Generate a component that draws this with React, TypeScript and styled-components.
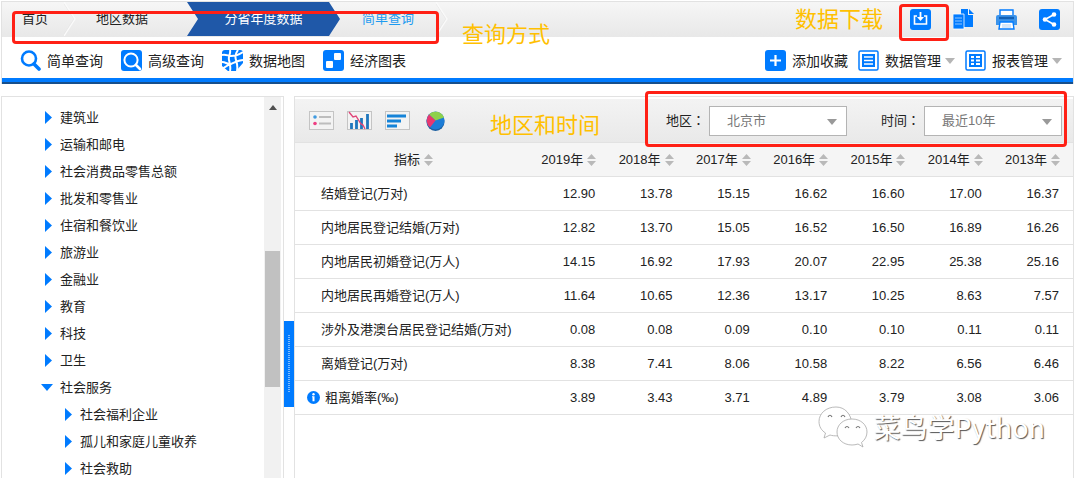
import React from "react";
import styled, { createGlobalStyle } from "styled-components";

const BLUE = "#007bff";
const LINE = "#e2e2e2";
const SANS = `"Liberation Sans", "Noto Sans CJK SC", sans-serif`;

const GlobalStyle = createGlobalStyle`
  *, *::before, *::after { box-sizing: border-box; }
  body { margin: 0; background: #fff; color: #222; font: 14px/20px ${SANS}; }
  button, select { font: inherit; color: inherit; }
  a { color: inherit; text-decoration: none; }
  svg { display: block; flex: none; }
`;

const Page = styled.div`
  display: flex;
  flex-direction: column;
  height: 100vh;
  padding: 1px 6px 0 1px;
  overflow: hidden;
`;

const Header = styled.header`
  flex: none;
  border: 1px solid ${LINE};
  border-bottom: 0;
`;

const TopBar = styled.div`
  display: flex;
  justify-content: space-between;
  height: 35px;
  background: linear-gradient(#f6f6f6, #e8e8e8);
`;

const Crumbs = styled.nav`
  position: relative;
  display: flex;
  height: 34px;
  font-size: 13px;
`;

const Crumb = styled.a<{ $width: number; $tone?: "active" | "link" }>`
  display: flex;
  align-items: center;
  justify-content: ${(p) => (p.$tone ? "center" : "flex-start")};
  width: ${(p) => p.$width}px;
  padding-left: ${(p) => (p.$tone ? 0 : 20)}px;
  ${(p) =>
    p.$tone === "active" &&
    `background: #1f58a8; color: #fff;
     clip-path: polygon(0 0, calc(100% - 11px) 0, 100% 50%, calc(100% - 11px) 100%, 0 100%, 11px 50%);`}
  ${(p) => p.$tone === "link" && "color: #1e9bf0;"}
`;

const Mark = styled.span<{ $inset: string }>`
  position: absolute;
  inset: ${(p) => p.$inset};
  border: 3px solid #ff2015;
  border-radius: 4px;
  pointer-events: none;
`;

const Note = styled.span<{ $left: number; $top: number }>`
  position: absolute;
  left: ${(p) => p.$left}px;
  top: ${(p) => p.$top}px;
  color: #ffc000;
  font-size: 22px;
  line-height: 28px;
  white-space: nowrap;
  pointer-events: none;
`;

const Actions = styled.div`
  display: flex;
  align-items: center;
  gap: 22px;
  padding-right: 13px;
`;

const IconButton = styled.button<{ $gap?: number }>`
  position: relative;
  display: flex;
  align-items: center;
  gap: 6px;
  padding: 0;
  border: 0;
  background: none;
  cursor: pointer;
`;

const ToolBar = styled.div`
  display: flex;
  align-items: center;
  justify-content: space-between;
  height: 41px;
  padding: 6px 11px 0 18px;
`;

const ToolGroup = styled.div<{ $gap: number }>`
  display: flex;
  gap: ${(p) => p.$gap}px;
`;

const MenuLabel = styled.span`
  display: flex;
  align-items: center;
  gap: 4px;
`;

const Rule = styled.div`
  height: 6px;
  background: ${BLUE};
  border-bottom: 2px solid #174f8c;
`;

const Main = styled.main`
  display: flex;
  flex: 1;
  min-height: 0;
  margin-top: 12px;
`;

const Sidebar = styled.aside`
  display: flex;
  flex: none;
  width: 283px;
  overflow: hidden;
  border: 1px solid ${LINE};
  border-bottom: 0;
`;

const Tree = styled.ul`
  flex: 1;
  margin: 0;
  padding: 7px 0 0;
  list-style: none;
  font-size: 13px;
`;

const TreeItem = styled.li<{ $level: number }>`
  padding-left: ${(p) => 18 + p.$level * 20}px;
`;

const TreeLink = styled.a`
  display: flex;
  align-items: center;
  gap: 6px;
  height: 27px;
`;

const ScrollTrack = styled.div`
  display: flex;
  flex-direction: column;
  align-items: center;
  width: 17px;
  margin-right: 2px;
  padding-top: 8px;
  background: #f1f1f1;
`;

const ScrollThumb = styled.div`
  width: 15px;
  height: 136px;
  margin-top: 141px;
  background: #c1c1c1;
`;

const Splitter = styled.button`
  flex: none;
  display: flex;
  align-items: center;
  justify-content: center;
  width: 10px;
  height: 86px;
  margin-top: 225px;
  padding: 0;
  border: 0;
  background: ${BLUE};
`;

const Panel = styled.section`
  position: relative;
  flex: 1;
  min-width: 0;
  border: 1px solid ${LINE};
  border-bottom: 0;
`;

const PanelBar = styled.div`
  position: relative;
  display: flex;
  align-items: center;
  justify-content: space-between;
  height: 43px;
  margin-top: 2px;
  padding: 0 11px 0 14px;
  background: linear-gradient(#f3f3f3, #e9e9e9);
`;

const Filters = styled.div`
  display: flex;
  gap: 34px;
  font-size: 13px;
`;

const Field = styled.div`
  display: flex;
  align-items: center;
  gap: 4px;
`;

const Colon = styled.span`
  font-family: "Noto Sans CJK TC", sans-serif;
`;

const SelectBox = styled.div`
  position: relative;
  width: 138px;
`;

const Select = styled.select`
  appearance: none;
  width: 100%;
  height: 30px;
  padding: 0 24px 0 17px;
  border: 1px solid #b4b4b4;
  border-radius: 0;
  background: #fff;
  color: #777;
`;

const SelectCaret = styled.span`
  position: absolute;
  top: 13px;
  right: 10px;
  pointer-events: none;
`;

const Table = styled.table`
  width: 100%;
  table-layout: fixed;
  border-collapse: collapse;
  font-size: 13px;
`;

const Th = styled.th<{ $first?: boolean }>`
  width: ${(p) => (p.$first ? "237px" : "auto")};
  height: 34px;
  padding: ${(p) => (p.$first ? "0" : "0 13px 0 0")};
  border-bottom: 1px solid ${LINE};
  border-top: 1px solid ${LINE};
  background: #f5f5f5;
  font-weight: 400;
`;

const SortButton = styled.button<{ $center?: boolean }>`
  display: flex;
  align-items: center;
  justify-content: ${(p) => (p.$center ? "center" : "flex-end")};
  gap: 4px;
  width: 100%;
  padding: 0;
  border: 0;
  background: none;
  white-space: nowrap;
`;

const Td = styled.td`
  height: 34px;
  padding: 0 14px 0 0;
  border-bottom: 1px solid ${LINE};
  text-align: right;
`;

const RowHead = styled.th<{ $info?: boolean }>`
  padding: 0 0 0 ${(p) => (p.$info ? 12 : 26)}px;
  border-bottom: 1px solid ${LINE};
  font-weight: 400;
  text-align: left;
  white-space: nowrap;
`;

const RowLabel = styled.span`
  display: flex;
  align-items: center;
  gap: 5px;
`;

const Watermark = styled.div`
  position: absolute;
  right: 28px;
  top: 308px;
  display: flex;
  align-items: center;
  gap: 5px;
  color: #fff;
  font: 27px/44px "Noto Sans CJK SC", sans-serif;
  text-shadow: 1px 1px 1px #555;
  pointer-events: none;
`;

const Icon = ({ children }: { children: React.ReactNode }) => (
  <svg width="21" height="21" viewBox="0 0 21 21" fill="none" aria-hidden="true">
    {children}
  </svg>
);

const Tile = () => <rect width="21" height="21" rx="3" fill={BLUE} />;

const SearchIcon = () => (
  <Icon>
    <circle cx="9" cy="8.500" r="7" stroke={BLUE} strokeWidth="2.600" />
    <path d="M14 14l5 5" stroke={BLUE} strokeWidth="3.600" strokeLinecap="round" />
  </Icon>
);

const AdvancedIcon = () => (
  <Icon>
    <Tile />
    <circle cx="10" cy="10" r="6.600" stroke="#fff" strokeWidth="2" />
    <path d="M15 15l4 4" stroke="#fff" strokeWidth="2.600" strokeLinecap="round" />
  </Icon>
);

const MapIcon = () => (
  <Icon>
    <Tile />
    <path
      d="M8 0c1 4-2 6-1 10s2 7 1 11M16 0c-3 4-3 7-2 10s2 6 1 11M0 5c4-1 6 1 9 1s7-1 12-4M0 12c4 0 6 3 9 2s7-4 12-4M0 19l8-5"
      stroke="#fff"
      strokeWidth="2"
    />
    <path d="M0 16v5h6zM21 13l-7 8h7z" fill="#fff" />
  </Icon>
);

const ChartTileIcon = () => (
  <Icon>
    <Tile />
    <rect x="11" y="3" width="7" height="7" rx="1" fill="#fff" />
    <rect x="3" y="11" width="7" height="7" rx="1" fill="#fff" />
  </Icon>
);

const PlusIcon = () => (
  <Icon>
    <Tile />
    <path d="M10.500 5v11M5 10.500h11" stroke="#fff" strokeWidth="2.200" />
  </Icon>
);

const ListIcon = () => (
  <Icon>
    <rect x="1" y="1" width="19" height="19" rx="1.500" stroke={BLUE} strokeWidth="1.500" />
    <rect x="4" y="4" width="13" height="13" fill={BLUE} />
    <path d="M6 7h9M6 10.500h9M6 14h9" stroke="#fff" strokeWidth="1.700" />
  </Icon>
);

const GridIcon = () => (
  <Icon>
    <rect x="1" y="1" width="19" height="19" rx="1.500" stroke={BLUE} strokeWidth="1.500" />
    <rect x="4" y="4" width="13" height="13" fill={BLUE} />
    <path
      d="M6 7h3M6 10.500h3M6 14h3M11 7h4M11 10.500h4M11 14h4"
      stroke="#fff"
      strokeWidth="2"
    />
  </Icon>
);

const DownloadIcon = () => (
  <Icon>
    <Tile />
    <path d="M7 7H4.500v8h12V7H14" stroke="#fff" strokeWidth="1.600" />
    <path d="M10.500 3v6" stroke="#fff" strokeWidth="1.800" />
    <path d="M7 8h7l-3.500 4z" fill="#fff" />
  </Icon>
);

const CopyIcon = () => (
  <Icon>
    <path d="M8 0h7v6h5v12H8z" fill={BLUE} />
    <path d="M16 0l5 5h-5z" fill={BLUE} />
    <path d="M0 5h11v15H0z" fill={BLUE} stroke="#fff" strokeWidth=".8" />
    <path d="M2 9h7M2 12h7M2 15h7" stroke="#8cc4ff" />
  </Icon>
);

const PrintIcon = () => (
  <Icon>
    <path d="M4 1h13v6H4z" fill="#fff" stroke={BLUE} strokeWidth="1.400" />
    <path d="M0 8q0-2 2-2h17q2 0 2 2v8H0z" fill="#3b93ea" />
    <path d="M3 9h15" stroke="#1260b5" strokeWidth="2.400" />
    <path d="M4 13h13l1 7H3z" fill="#fff" stroke={BLUE} strokeWidth="1.400" />
    <path d="M6 16h9M6 18h9" stroke="#a9cdf5" />
  </Icon>
);

const ShareIcon = () => (
  <Icon>
    <Tile />
    <path d="M15 5.500l-9 5 9 5" stroke="#fff" strokeWidth="1.600" />
    <circle cx="15" cy="5.500" r="2.300" fill="#fff" />
    <circle cx="6" cy="10.500" r="2.300" fill="#fff" />
    <circle cx="15" cy="15.500" r="2.300" fill="#fff" />
  </Icon>
);

const Caret = ({ color = "#b5b5b5" }: { color?: string }) => (
  <svg width="10" height="6" viewBox="0 0 10 6" aria-hidden="true">
    <path d="M0 0h10L5 6z" fill={color} />
  </svg>
);

const Chevron = () => (
  <svg width="12" height="34" viewBox="0 0 12 34" fill="none" aria-hidden="true">
    <path d="M-1 0l11 17L-1 34" stroke="#e4e4e4" strokeWidth=".7" />
    <path d="M0 0l11 17L0 34" stroke="#fafafa" strokeWidth="1.300" />
  </svg>
);

const SortIcon = () => (
  <svg width="9" height="12" viewBox="0 0 9 12" fill="#b9b9b9" aria-hidden="true">
    <path d="M4.500 0L9 5H0zM4.500 12L0 7h9z" />
  </svg>
);

const TreeArrow = ({ open }: { open?: boolean }) => (
  <svg width="14" height="13" viewBox="0 0 14 13" fill={BLUE} aria-hidden="true">
    {open ? <path d="M1 3h12l-6 7z" /> : <path d="M5 0l7 6.500L5 13z" />}
  </svg>
);

const InfoIcon = () => (
  <svg width="13" height="13" viewBox="0 0 13 13" aria-hidden="true">
    <circle cx="6.500" cy="6.500" r="6.500" fill={BLUE} />
    <circle cx="6.500" cy="3.300" r="1.200" fill="#fff" />
    <path d="M5 5.300h2.500v5H5.500v-4H5z" fill="#fff" />
  </svg>
);

const ViewFrame = ({ children }: { children: React.ReactNode }) => (
  <svg width="25" height="19" viewBox="0 0 25 19" fill="none" aria-hidden="true">
    <rect x=".5" y=".5" width="24" height="18" fill="#f3f3f3" stroke="#c4c4c4" />
    {children}
  </svg>
);

const ListView = () => (
  <ViewFrame>
    <circle cx="6" cy="6" r="1.800" fill="#3f9ae0" />
    <circle cx="6" cy="12.500" r="1.800" fill="#ee3f83" />
    <path d="M10 6h12M10 12.500h12" stroke="#bdbdbd" strokeWidth="1.800" />
  </ViewFrame>
);

const ColumnView = () => (
  <ViewFrame>
    <path d="M4.500 18v-6M9.500 18V9M14.500 18V7M20.500 18V3" stroke="#1f77bd" strokeWidth="2.800" />
    <path d="M2 1l4 5 3-1 5 8 2 1 2 4" stroke="#e04578" strokeWidth="1.400" />
  </ViewFrame>
);

const BarView = () => (
  <ViewFrame>
    <path d="M2 5h19M2 10h14M2 15h10" stroke="#1583d8" strokeWidth="3" />
  </ViewFrame>
);

const PieView = () => (
  <svg width="25" height="20" viewBox="-3 0 25 20" aria-hidden="true">
    <ellipse cx="9.500" cy="11" rx="9" ry="9" fill="#1b5fa0" />
    <circle cx="9.500" cy="9.500" r="9" fill="#1c7cd6" />
    <path d="M9.500 9.500L3 3.500A9 9 0 0 1 18 6.500z" fill="#8ed14b" />
    <path d="M9.500 9.500L3 3.500A9 9 0 0 0 4 16.500z" fill="#e8376f" />
  </svg>
);

const BubblesIcon = () => (
  <svg width="50" height="42" viewBox="0 0 50 42" fill="#fff" stroke="#a8a8a8" strokeWidth=".8" aria-hidden="true">
    <path d="M18 1C8 1 1 7.500 1 15.500c0 5 2.500 9 6.500 11.500L6 32l6-3c2 .7 5 1 8 .8l14-12C33 8 27 1 18 1z" />
    <path d="M34 13c-9 0-15 6-15 13s6 13 15 13c2 0 4-.3 6-1l5 3-1.500-4.500C47 34 49 30 49 26c0-7-6-13-15-13z" />
    <path
      d="M10 11q2-3.500 4 0M23 11q2-3.500 4 0M27 22q2-3 4 0M38 22q2-3 4 0"
      fill="none"
      stroke="#777"
      strokeWidth="1.200"
    />
  </svg>
);

const tools = [
  { label: "简单查询", icon: <SearchIcon /> },
  { label: "高级查询", icon: <AdvancedIcon /> },
  { label: "数据地图", icon: <MapIcon /> },
  { label: "经济图表", icon: <ChartTileIcon /> },
];

const tree = [
  "建筑业",
  "运输和邮电",
  "社会消费品零售总额",
  "批发和零售业",
  "住宿和餐饮业",
  "旅游业",
  "金融业",
  "教育",
  "科技",
  "卫生",
  "社会服务",
].map((label) => ({ label, level: 1, open: label === "社会服务" }));

const subTree = ["社会福利企业", "孤儿和家庭儿童收养", "社会救助"].map((label) => ({
  label,
  level: 2,
  open: false,
}));

const years = [2019, 2018, 2017, 2016, 2015, 2014, 2013];

const rows: { label: string; info?: boolean; values: string[] }[] = [
  { label: "结婚登记(万对)", values: ["12.90", "13.78", "15.15", "16.62", "16.60", "17.00", "16.37"] },
  { label: "内地居民登记结婚(万对)", values: ["12.82", "13.70", "15.05", "16.52", "16.50", "16.89", "16.26"] },
  { label: "内地居民初婚登记(万人)", values: ["14.15", "16.92", "17.93", "20.07", "22.95", "25.38", "25.16"] },
  { label: "内地居民再婚登记(万人)", values: ["11.64", "10.65", "12.36", "13.17", "10.25", "8.63", "7.57"] },
  { label: "涉外及港澳台居民登记结婚(万对)", values: ["0.08", "0.08", "0.09", "0.10", "0.10", "0.11", "0.11"] },
  { label: "离婚登记(万对)", values: ["8.38", "7.41", "8.06", "10.58", "8.22", "6.56", "6.46"] },
  { label: "粗离婚率(‰)", info: true, values: ["3.89", "3.43", "3.71", "4.89", "3.79", "3.08", "3.06"] },
];

const FilterField = ({ id, label, value }: { id: string; label: string; value: string }) => (
  <Field>
    <label htmlFor={id}>{label}<Colon>：</Colon></label>
    <SelectBox>
      <Select id={id} defaultValue={value}>
        <option>{value}</option>
      </Select>
      <SelectCaret>
        <Caret color="#999" />
      </SelectCaret>
    </SelectBox>
  </Field>
);

export default function App() {
  return (
    <Page>
      <GlobalStyle />
      <Header>
        <TopBar>
          <Crumbs>
            <Crumb href="#" $width={62}>首页</Crumb>
            <Chevron />
            <Crumb href="#" $width={111}>地区数据</Crumb>
            <Crumb href="#" $width={153} $tone="active">分省年度数据</Crumb>
            <Crumb href="#" $width={96} $tone="link">简单查询</Crumb>
            <Chevron />
            <Mark $inset="9px 9px -8px 10px" />
            <Note $left={460} $top={19}>查询方式</Note>
          </Crumbs>
          <Actions>
            <IconButton aria-label="下载">
              <DownloadIcon />
              <Mark $inset="-5px -18px -11px -11px" />
              <Note $left={-115} $top={-3}>数据下载</Note>
            </IconButton>
            <IconButton aria-label="复制"><CopyIcon /></IconButton>
            <IconButton aria-label="打印"><PrintIcon /></IconButton>
            <IconButton aria-label="分享"><ShareIcon /></IconButton>
          </Actions>
        </TopBar>
        <ToolBar>
          <ToolGroup $gap={18}>
            {tools.map((t) => (
              <IconButton key={t.label}>{t.icon}{t.label}</IconButton>
            ))}
          </ToolGroup>
          <ToolGroup $gap={10}>
            <IconButton><PlusIcon />添加收藏</IconButton>
            <IconButton><ListIcon /><MenuLabel>数据管理<Caret /></MenuLabel></IconButton>
            <IconButton><GridIcon /><MenuLabel>报表管理<Caret /></MenuLabel></IconButton>
          </ToolGroup>
        </ToolBar>
        <Rule />
      </Header>
      <Main>
        <Sidebar>
          <Tree>
            {[...tree, ...subTree].map((n) => (
              <TreeItem key={n.label} $level={n.level}>
                <TreeLink href="#"><TreeArrow open={n.open} />{n.label}</TreeLink>
              </TreeItem>
            ))}
          </Tree>
          <ScrollTrack>
            <svg width="8" height="5" viewBox="0 0 8 5" aria-hidden="true">
              <path d="M4 0l4 5H0z" fill="#505050" />
            </svg>
            <ScrollThumb />
          </ScrollTrack>
        </Sidebar>
        <Splitter aria-label="收起目录">
          <svg width="2" height="58" aria-hidden="true">
            <path d="M1 0v58" stroke="#7fbcff" strokeWidth="2" strokeDasharray="1 1" />
          </svg>
        </Splitter>
        <Panel>
          <PanelBar>
            <ToolGroup $gap={13}>
              <IconButton aria-label="列表"><ListView /></IconButton>
              <IconButton aria-label="柱状图"><ColumnView /></IconButton>
              <IconButton aria-label="条形图"><BarView /></IconButton>
              <IconButton aria-label="饼图"><PieView /></IconButton>
            </ToolGroup>
            <Note $left={195} $top={13}>地区和时间</Note>
            <Filters>
              <FilterField id="region" label="地区" value="北京市" />
              <FilterField id="period" label="时间" value="最近10年" />
            </Filters>
            <Mark $inset="-8px 6px -5px 350px" />
          </PanelBar>
          <Table>
            <thead>
              <tr>
                <Th $first><SortButton $center>指标<SortIcon /></SortButton></Th>
                {years.map((y) => (
                  <Th key={y}><SortButton>{y}年<SortIcon /></SortButton></Th>
                ))}
              </tr>
            </thead>
            <tbody>
              {rows.map((r) => (
                <tr key={r.label}>
                  <RowHead scope="row" $info={r.info}>
                    <RowLabel>{r.info && <InfoIcon />}{r.label}</RowLabel>
                  </RowHead>
                  {r.values.map((v, i) => (
                    <Td key={years[i]}>{v}</Td>
                  ))}
                </tr>
              ))}
            </tbody>
          </Table>
          <Watermark><BubblesIcon />菜鸟学Python</Watermark>
        </Panel>
      </Main>
    </Page>
  );
}
